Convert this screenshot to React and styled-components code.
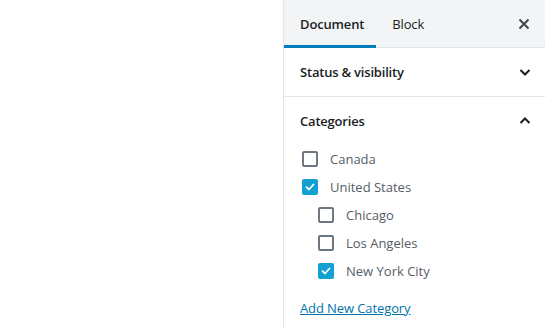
import React, { useState } from "react";
import styled, { createGlobalStyle } from "styled-components";

const GlobalStyle = createGlobalStyle`
    html, body {
        margin: 0;
        padding: 0;
        background: #ffffff;
        font-family: "Open Sans", "Noto Sans", sans-serif;
    }
    #root {
        height: 100vh;
    }
`;

const initialCategories = [
    { id: "canada", name: "Canada", checked: false, children: [] },
    {
        id: "us",
        name: "United States",
        checked: true,
        children: [
            { id: "chicago", name: "Chicago", checked: false },
            { id: "la", name: "Los Angeles", checked: false },
            { id: "nyc", name: "New York City", checked: true },
        ],
    },
];

const CheckIcon = () => (
    <svg width="12" height="12" viewBox="0 0 12 12">
        <path d="M2.5 6.2 L5 8.5 L9.5 3.5" fill="none" stroke="#fff" strokeWidth="1.8" strokeLinecap="round" strokeLinejoin="round" />
    </svg>
);

const Chevron = ({ up }) => (
    <svg width="14" height="14" viewBox="0 0 14 14">
        <path
            d={up ? "M2.5 9 L7 4.5 L11.5 9" : "M2.5 5 L7 9.5 L11.5 5"}
            fill="none"
            stroke="#1e1e1e"
            strokeWidth="2"
        />
    </svg>
);

const CloseIcon = () => (
    <svg width="12" height="12" viewBox="0 0 12 12">
        <path d="M1.5 1.5 L10.5 10.5 M10.5 1.5 L1.5 10.5" stroke="#40464d" strokeWidth="2" />
    </svg>
);

const CategoryItem = ({ item, onToggle }) => (
    <Row>
        <Box checked={item.checked} onClick={() => onToggle(item.id)}>
            {item.checked && <CheckIcon />}
        </Box>
        <Label>{item.name}</Label>
    </Row>
);

const App = () => {
    const [categories, setCategories] = useState(initialCategories);

    const toggle = (id) => {
        setCategories((cats) =>
            cats.map((c) => ({
                ...c,
                checked: c.id === id ? !c.checked : c.checked,
                children: c.children.map((ch) => ({
                    ...ch,
                    checked: ch.id === id ? !ch.checked : ch.checked,
                })),
            }))
        );
    };

    return (
        <>
            <GlobalStyle />
            <Page>
                <Canvas />
                <Sidebar>
                    <Header>
                        <Tab active>Document</Tab>
                        <Tab>Block</Tab>
                        <CloseButton>
                            <CloseIcon />
                        </CloseButton>
                    </Header>
                    <Panel>
                        <PanelTitle>
                            <span>Status &amp; visibility</span>
                            <Chevron />
                        </PanelTitle>
                    </Panel>
                    <Panel>
                        <PanelTitle>
                            <span>Categories</span>
                            <Chevron up />
                        </PanelTitle>
                        <PanelBody>
                            <List>
                                {categories.map((c) => (
                                    <li key={c.id}>
                                        <CategoryItem item={c} onToggle={toggle} />
                                        {c.children.length > 0 && (
                                            <SubList>
                                                {c.children.map((ch) => (
                                                    <li key={ch.id}>
                                                        <CategoryItem item={ch} onToggle={toggle} />
                                                    </li>
                                                ))}
                                            </SubList>
                                        )}
                                    </li>
                                ))}
                            </List>
                            <AddLink href="#">Add New Category</AddLink>
                        </PanelBody>
                    </Panel>
                </Sidebar>
            </Page>
        </>
    );
};

export default App;

// Styled Components
const Page = styled.div`
    display: flex;
    height: 100%;
    overflow: hidden;
`;

const Canvas = styled.div`
    flex: 1;
    background: #ffffff;
`;

const Sidebar = styled.aside`
    width: 261px;
    flex-shrink: 0;
    border-left: 1px solid #e2e4e7;
    background: #ffffff;
    overflow: hidden;
`;

const Header = styled.div`
    display: flex;
    align-items: stretch;
    height: 47px;
    background: #f3f4f5;
    border-bottom: 1px solid #e2e4e7;
`;

const Tab = styled.button`
    border: none;
    background: transparent;
    padding: 3px 12px 0 16px;
    font-family: inherit;
    font-size: 13px;
    font-weight: ${(p) => (p.active ? 600 : 400)};
    letter-spacing: -0.15px;
    color: #191e23;
    border-bottom: 3px solid ${(p) => (p.active ? "#007cba" : "transparent")};
    margin-bottom: -1px;
    cursor: pointer;
`;

const CloseButton = styled.button`
    margin-left: auto;
    width: 42px;
    border: none;
    background: transparent;
    display: flex;
    align-items: center;
    justify-content: center;
    cursor: pointer;
`;

const Panel = styled.div`
    border-bottom: 1px solid #e2e4e7;
`;

const PanelTitle = styled.div`
    display: flex;
    align-items: center;
    justify-content: space-between;
    height: 48px;
    padding: 0 13px 0 16px;
    font-size: 13px;
    font-weight: 600;
    letter-spacing: -0.2px;
    color: #191e23;
`;

const PanelBody = styled.div`
    padding: 0 16px 14px;
`;

const List = styled.ul`
    list-style: none;
    margin: 0;
    padding: 0;
`;

const SubList = styled.ul`
    list-style: none;
    margin: 0;
    padding: 0 0 0 16px;
`;

const Row = styled.div`
    display: flex;
    align-items: center;
    height: 28px;
`;

const Box = styled.span`
    box-sizing: border-box;
    width: 16px;
    height: 16px;
    border: 2px solid ${(p) => (p.checked ? "#11a0d2" : "#6c7781")};
    border-radius: 2px;
    background: ${(p) => (p.checked ? "#11a0d2" : "#ffffff")};
    display: flex;
    align-items: center;
    justify-content: center;
    margin-left: 2px;
    margin-right: 12px;
    cursor: pointer;
`;

const Label = styled.span`
    font-size: 13px;
    color: #555d66;
`;

const AddLink = styled.a`
    display: inline-block;
    margin-top: 14px;
    font-size: 13px;
    letter-spacing: -0.1px;
    color: #0073aa;
    text-decoration: underline;
`;
